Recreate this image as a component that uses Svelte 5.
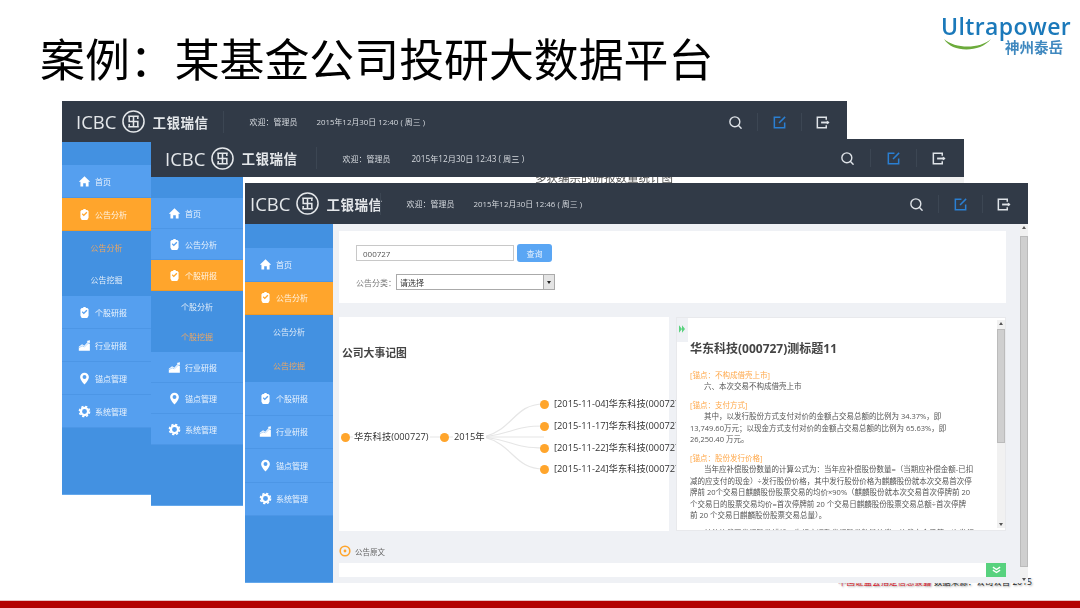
<script>
  // three screenshots of the same app, stacked on the slide
  const windows = [
    {
      id: 'a', left: 62, top: 0, width: 785, height: 394, head: 41, side: 89, strip: 23, row: 33, sub: 32.5, pad: 16, tool: 42.5, barPad: 14,
      time: '12:40', active: '公告分析', subs: ['公告分析', '公告挖掘'], activeSub: 0, gapBrand: 15, gapDate: 19, nameW: 48, dateSize: 7.9,
    },
    {
      id: 'b', left: 151, top: 38, width: 813, height: 367, head: 38, side: 92, strip: 21, row: 31, sub: 30.5, pad: 17, tool: 44.5, barPad: 14,
      time: '12:43', active: '个股研报', subs: ['个股分析', '个股挖掘'], activeSub: 1, gapBrand: 19, gapDate: 20, nameW: 49, dateSize: 8.2,
    },
    {
      id: 'c', left: 245, top: 82, width: 783, height: 400, head: 41, side: 88, strip: 24, row: 33.5, sub: 33.5, pad: 14, tool: 42.5, barPad: 5,
      time: '12:46', active: '公告分析', subs: ['公告分析', '公告挖掘'], activeSub: 1, gapBrand: -2, gapDate: 20, nameW: 47, dateSize: 7.9,
    },
  ]

  const nav = [
    { label: '首页', icon: 'home' },
    { label: '公告分析', icon: 'badge' },
    { label: '个股研报', icon: 'badge' },
    { label: '行业研报', icon: 'chart' },
    { label: '锚点管理', icon: 'pin' },
    { label: '系统管理', icon: 'gear' },
  ]

  const events = [
    { y: 87, text: '[2015-11-04]华东科技(000727)' },
    { y: 109, text: '[2015-11-17]华东科技(000727)' },
    { y: 131, text: '[2015-11-22]华东科技(000727)' },
    { y: 152, text: '[2015-11-24]华东科技(000727)' },
  ]

  const sections = [
    {
      tag: '[锚点：不构成借壳上市]',
      lines: ['六、本次交易不构成借壳上市'],
    },
    {
      tag: '[锚点：支付方式]',
      lines: [
        '其中，以发行股份方式支付对价的金额占交易总额的比例为 34.37%，即',
        '13,749.60万元；以现金方式支付对价的金额占交易总额的比例为 65.63%，即',
        '26,250.40 万元。',
      ],
    },
    {
      tag: '[锚点：股份发行价格]',
      lines: [
        '当年应补偿股份数量的计算公式为：当年应补偿股份数量=（当期应补偿金额-已扣',
        '减的应支付的现金）÷发行股份价格，其中发行股份价格为麒麟股份就本次交易首次停',
        '牌前 20个交易日麒麟股份股票交易的均价×90%（麒麟股份就本次交易首次停牌前 20',
        '个交易日的股票交易均价=首次停牌前 20 个交易日麒麟股份股票交易总额÷首次停牌',
        '前 20 个交易日麒麟股份股票交易总量）。',
      ],
    },
  ]
</script>

{#snippet navIcon(name)}
  <svg class="nav-icon" viewBox="0 0 16 16" fill="currentColor">
    {#if name === 'home'}
      <path d="M8 1.5 15 8.3h-2V14H9.6v-4H6.4v4H3V8.3H1z" />
    {:else if name === 'badge'}
      <path fill-rule="evenodd" d="M4.5 2.5h2V1.2h3v1.3h2L13 4v8l-1.6 2.8H4.6L3 12V4zM4.7 7.6l2.4 2.7 4.4-4.5-1.2-1.1-3.2 3.2-1.3-1.4z" />
    {:else if name === 'chart'}
      <path d="M1 14.5v-3.2l4-2.8 2.8 1.8 5-5.2 1.8 1v8.4z" />
      <path d="M1 9.4 5 6.4l2.7 1.8L12 3.6l-1.3-1 4-1-.3 4-1.2-1.2-5.3 5.3L5 8 1 11z" />
    {:else if name === 'pin'}
      <path fill-rule="evenodd" d="M8 .8a5.4 5.4 0 0 1 5.4 5.4C13.4 9.8 8 15.5 8 15.5S2.6 9.8 2.6 6.2A5.4 5.4 0 0 1 8 .8zM8 3.8a2.4 2.4 0 1 0 0 4.8 2.4 2.4 0 0 0 0-4.8z" />
    {:else}
      <circle cx="8" cy="8" r="4.4" fill="none" stroke="currentColor" stroke-width="2.8" />
      <circle cx="8" cy="8" r="6.3" fill="none" stroke="currentColor" stroke-width="1.8" stroke-dasharray="2.8 2.15" />
    {/if}
  </svg>
{/snippet}

{#snippet topIcons()}
  <div class="tools">
    <div class="tool">
      <svg viewBox="0 0 16 16" fill="none" stroke="#dfe3e8" stroke-width="1.5" stroke-linecap="round">
        <circle cx="7.3" cy="7.3" r="5.3" />
        <path d="m11.2 11.2 2.8 3" />
      </svg>
    </div>
    <div class="tool">
      <svg viewBox="0 0 16 16" fill="none" stroke="#2a7fd2" stroke-width="1.6">
        <path d="M13.5 8v5.5h-11v-11H9" />
        <path d="M14 2 7.5 8.5" />
      </svg>
    </div>
    <div class="tool">
      <svg viewBox="0 0 16 16" fill="none" stroke="#dfe3e8" stroke-width="1.6">
        <path d="M12 5V2.5H2.5v11H12V11" />
        <path d="M6.5 8h8" stroke-width="2" />
        <path d="m12.5 5.8 3 2.2-3 2.2z" fill="#dfe3e8" stroke="none" />
      </svg>
    </div>
  </div>
{/snippet}

<div class="slide">
  <header class="top">
    <h1>案例：某基金公司投研大数据平台</h1>
    <div class="ultra">
      <span class="ultra-name">Ultrapower</span>
      <span class="ultra-cn">神州泰岳</span>
      <svg class="ultra-arc" viewBox="0 0 50 14" fill="none">
        <path d="M1 1c8 14 36 14 47 0-11 10-36 10-47 0z" fill="#6cab3c" />
      </svg>
    </div>
  </header>

  <div class="canvas">
    <div class="stray"><span class="stray-red">中国证监会指定信息披露</span> 数据来源：公司公告 2015</div>

    {#each windows as w}
      <section
        class="win win-{w.id}"
        style="left:{w.left}px;top:{w.top}px;width:{w.width}px;height:{w.height}px;--head:{w.head}px;--side:{w.side}px;--strip:{w.strip}px;--row:{w.row}px;--sub:{w.sub}px;--pad:{w.pad}px;--tool:{w.tool}px;--bar-pad:{w.barPad}px"
      >
        <div class="bar">
          <div class="brand">
            <span class="icbc">ICBC</span>
            <svg class="coin" viewBox="0 0 24 24" fill="none" stroke="#e4e7ea" stroke-width="1.6">
              <circle cx="12" cy="12" r="11" />
              <path d="M6.5 6.5h11M6.5 17.5h11M7.5 6.5v5.5h9v5.5M16.5 6.5v3M7.5 17.5v-3M12 6.5v11" />
            </svg>
            <span class="brand-cn">工银瑞信</span>
          </div>
          <span class="divider" style="margin-left:{w.gapBrand}px"></span>
          <span class="hello" style="width:{w.nameW}px">欢迎：管理员</span>
          <span class="date" style="margin-left:{w.gapDate}px;font-size:{w.dateSize}px">2015年12月30日 {w.time} ( 周三 )</span>
          {@render topIcons()}
        </div>

        <div class="body">
          <nav class="side">
            <div class="strip"></div>
            {#each nav as item}
              <div class="item" class:on={item.label === w.active}>
                {@render navIcon(item.icon)}
                <span>{item.label}</span>
              </div>
              {#if item.label === w.active}
                <div class="subs">
                  {#each w.subs as s, i}
                    <div class="sub" class:picked={i === w.activeSub}>{s}</div>
                  {/each}
                </div>
              {/if}
            {/each}
          </nav>

          {#if w.id === 'b'}
            <div class="main-b">
              <p class="peek">多获编宗的研报数量统计图</p>
              <div class="peek-scroll"></div>
            </div>
          {/if}

          {#if w.id === 'c'}
            <div class="main">
              <div class="content">
                <div class="search">
                  <div class="search-row">
                    <input class="code" value="000727" readonly />
                    <button class="go">查询</button>
                  </div>
                  <div class="kind">
                    <span class="kind-label">公告分类：</span>
                    <div class="select">
                      <span>请选择</span>
                      <i class="caret"></i>
                    </div>
                  </div>
                </div>

                <div class="panels">
                  <div class="chart">
                    <h3>公司大事记图</h3>
                    <svg class="links" viewBox="0 0 340 214" fill="none" stroke="#e6e6e6" stroke-width="1.2">
                      <path d="M6 120H205" />
                      <path d="M145 120C175 112 175 87 205 87" />
                      <path d="M145 120C175 116 175 109 205 109" />
                      <path d="M145 120C175 124 175 131 205 131" />
                      <path d="M145 120C175 128 175 152 205 152" />
                    </svg>
                    <span class="dot" style="left:6px;top:120px"></span>
                    <span class="node" style="left:14px;top:120px">华东科技(000727)</span>
                    <span class="dot" style="left:105px;top:120px"></span>
                    <span class="node" style="left:114px;top:120px">2015年</span>
                    {#each events as e}
                      <span class="dot" style="left:205px;top:{e.y}px"></span>
                      <span class="node leaf" style="left:214px;top:{e.y}px">{e.text}</span>
                    {/each}
                  </div>

                  <div class="detail">
                    <div class="flap">
                      <svg viewBox="0 0 8 10" fill="#5ad27e">
                        <path d="M0 0 4 5 0 10zM4 0 8 5 4 10z" />
                      </svg>
                    </div>
                    <div class="doc">
                      <h2>华东科技(000727)测标题11</h2>
                      {#each sections as s}
                        <div class="sec">
                          <div class="tag">{s.tag}</div>
                          {#each s.lines as line, i}
                            <div class="line" class:first={i === 0}>{line}</div>
                          {/each}
                        </div>
                      {/each}
                      <div class="line first">其他补偿至发行股份麒麟公告相应调整发行股份数量补偿，补偿完全后第一次发行</div>
                    </div>
                    <div class="scroll small"><b class="thumb"></b></div>
                  </div>
                </div>

                <div class="source">
                  <svg viewBox="0 0 12 12" fill="none">
                    <circle cx="6" cy="6" r="4.8" stroke="#ffa52c" stroke-width="1.6" />
                    <circle cx="6" cy="6" r="1.4" fill="#ffa52c" />
                  </svg>
                  <span>公告原文</span>
                </div>
                <div class="source-bar">
                  <div class="expand">
                    <svg viewBox="0 0 10 8" fill="none" stroke="#fff" stroke-width="1.5">
                      <path d="m1 .8 4 2.6L9 .8M1 4.2l4 2.6 4-2.6" />
                    </svg>
                  </div>
                </div>
              </div>
              <div class="scroll"><b class="thumb"></b></div>
            </div>
          {/if}
        </div>
      </section>
    {/each}
  </div>

  <div class="rule"></div>
</div>

<style>
  :global(body) {
    margin: 0;
    background: #fff;
  }

  .slide {
    width: 1080px;
    height: 608px;
    display: flex;
    flex-direction: column;
    overflow: hidden;
    background: #fff;
    font-family: "Open Sans", "Noto Sans CJK SC", sans-serif;
  }

  .top {
    height: 101px;
    flex: none;
    display: flex;
    justify-content: space-between;
    align-items: flex-start;
  }

  h1 {
    margin: 33px 0 0 40px;
    font-family: "Noto Sans CJK SC", sans-serif;
    font-size: 44.9px;
    line-height: 50px;
    font-weight: 400;
    color: #000;
    filter: blur(0.3px);
  }

  .ultra {
    position: relative;
    width: 130px;
    margin: 14px 9px 0 0;
    display: flex;
    flex-direction: column;
    align-items: flex-end;
    filter: blur(0.4px);
  }

  .ultra-name {
    align-self: flex-start;
    font-family: "Open Sans", sans-serif;
    font-size: 23px;
    font-weight: 600;
    line-height: 24px;
    letter-spacing: 0.4px;
    color: #1b79ba;
    white-space: nowrap;
  }

  .ultra-cn {
    margin: 0 8px 0 0;
    font-family: "Noto Sans CJK SC", sans-serif;
    font-weight: 700;
    font-size: 14.5px;
    line-height: 17px;
    color: #3f88bf;
  }

  .ultra-arc {
    position: absolute;
    left: 2px;
    top: 24px;
    width: 50px;
    height: 14px;
  }

  .canvas {
    position: relative;
    flex: 1;
  }

  .stray {
    position: absolute;
    left: 838px;
    top: 474px;
    font-size: 8.5px;
    line-height: 14px;
    white-space: nowrap;
    color: #222;
    text-shadow: 1px 1px 2px #999;
  }

  .stray-red {
    color: #d3162a;
  }

  .rule {
    height: 7px;
    flex: none;
    background: #b30000;
    border-top: 1px solid #e5c3c3;
    box-sizing: content-box;
  }

  .win {
    position: absolute;
    display: flex;
    flex-direction: column;
    filter: blur(0.6px);
  }

  .bar {
    height: var(--head);
    flex: none;
    display: flex;
    align-items: center;
    padding-left: var(--bar-pad);
    background: #313a47;
    color: #d5d9de;
  }

  .brand {
    display: flex;
    align-items: center;
    color: #e4e7ea;
    white-space: nowrap;
  }

  .icbc {
    font-family: "Open Sans", sans-serif;
    font-size: 18.5px;
    font-weight: 500;
  }

  .coin {
    width: 23px;
    height: 23px;
    margin-left: 6px;
  }

  .brand-cn {
    margin-left: 7px;
    font-family: "Noto Sans CJK SC", sans-serif;
    font-weight: 700;
    font-size: 13.5px;
    letter-spacing: 0.5px;
  }

  .divider {
    width: 1px;
    height: 22px;
    margin-right: 25px;
    background: #3c4653;
  }

  .hello,
  .date {
    font-size: 8px;
    white-space: nowrap;
  }

  .tools {
    margin-left: auto;
    margin-right: 3px;
    display: flex;
  }

  .tool {
    width: var(--tool);
    height: 18px;
    display: flex;
    justify-content: center;
    border-left: 1px solid #3c4653;
  }

  .tool:first-child {
    border-left: 0;
  }

  .tool svg {
    width: 15px;
    height: 15px;
    margin-top: 2px;
  }

  .body {
    flex: 1;
    min-height: 0;
    display: flex;
  }

  .side {
    width: var(--side);
    flex: none;
    background: #4391e1;
    box-shadow: inset 0 -1px #64a8ec;
  }

  .strip {
    height: var(--strip);
  }

  .item {
    height: var(--row);
    box-sizing: border-box;
    display: flex;
    align-items: center;
    padding-left: var(--pad);
    background: #559fef;
    border-bottom: 1px solid #4c96e6;
    color: #fff;
    font-size: 8px;
    white-space: nowrap;
  }

  .item span {
    margin-left: 4px;
    opacity: 0.88;
  }

  .item.on {
    background: #ffa52c;
    border-bottom-color: #f09a26;
  }

  .nav-icon {
    width: 13px;
    height: 13px;
    flex: none;
  }

  .subs {
    background: #4391e1;
  }

  .sub {
    height: var(--sub);
    display: flex;
    align-items: center;
    justify-content: center;
    color: #e2edf9;
    font-size: 8px;
  }

  .sub.picked {
    color: #eda762;
  }

  .main-b {
    flex: 1;
    display: flex;
    overflow: hidden;
    background: #fff;
  }

  .peek {
    flex: 1;
    margin: -6px 0 0;
    padding-left: 292px;
    font-size: 11.5px;
    line-height: 14px;
    color: #555;
  }

  .peek-scroll {
    width: 24px;
    background: #f0f0f0;
  }

  .main {
    flex: 1;
    min-width: 0;
    display: flex;
    background: #eff1f5;
  }

  .content {
    flex: 1;
    min-width: 0;
    padding: 7px 14px 0 6px;
  }

  .search {
    height: 72px;
    box-sizing: border-box;
    padding: 13px 0 0 17px;
    background: #fff;
  }

  .search-row {
    display: flex;
    align-items: center;
  }

  .code {
    width: 158px;
    height: 16px;
    box-sizing: border-box;
    padding: 0 6px;
    border: 1.5px solid #c8c8c8;
    outline: none;
    font-family: "Open Sans", sans-serif;
    font-size: 8px;
    color: #555;
  }

  .go {
    width: 35px;
    height: 18px;
    margin-left: 3px;
    padding: 0;
    border: 0;
    border-radius: 3px;
    background: #5aa6f4;
    color: #e8f2fd;
    font-family: "Noto Sans CJK SC", sans-serif;
    font-size: 8px;
  }

  .kind {
    margin-top: 12px;
    display: flex;
    align-items: center;
  }

  .kind-label {
    width: 40px;
    font-size: 8px;
    color: #777;
    white-space: nowrap;
  }

  .select {
    width: 159px;
    height: 16px;
    box-sizing: border-box;
    padding-left: 3px;
    display: flex;
    align-items: center;
    justify-content: space-between;
    border: 1.5px solid #aaa;
    font-size: 8px;
    color: #333;
  }

  .caret {
    width: 10px;
    height: 100%;
    background: #e4e4e4;
    border-left: 1px solid #aaa;
    position: relative;
  }

  .caret::after {
    content: "";
    position: absolute;
    left: 3px;
    top: 6px;
    border: 2px solid transparent;
    border-top: 3px solid #222;
  }

  .panels {
    height: 214px;
    margin-top: 14px;
    display: flex;
    gap: 7px;
  }

  .chart {
    position: relative;
    width: 330px;
    flex: none;
    background: #fff;
  }

  .chart h3 {
    margin: 0;
    padding: 28px 0 0 3px;
    font-family: "Noto Sans CJK SC", sans-serif;
    font-size: 10.8px;
    line-height: 14px;
    font-weight: 700;
    color: #444;
  }

  .links {
    position: absolute;
    left: 0;
    top: 0;
    width: 340px;
    height: 214px;
  }

  .dot {
    position: absolute;
    width: 9px;
    height: 9px;
    margin: -4.5px 0 0 -4.5px;
    border-radius: 50%;
    background: #ffa52c;
  }

  .node {
    position: absolute;
    transform: translateY(-50%);
    padding: 0 1px;
    background: #fff;
    font-size: 9.3px;
    line-height: 12px;
    white-space: nowrap;
    color: #333;
  }

  .leaf {
    background: none;
  }

  .detail {
    position: relative;
    flex: 1;
    min-width: 0;
    display: flex;
    border: 1px solid #e8e9ec;
    background: #fff;
    overflow: hidden;
  }

  .flap {
    position: absolute;
    left: 0;
    top: 0;
    width: 11px;
    height: 24px;
    background: #eff1f5;
  }

  .flap svg {
    display: block;
    width: 6px;
    height: 8px;
    margin: 7px 0 0 2px;
  }

  .doc {
    flex: 1;
    min-width: 0;
    padding: 22px 0 0 13px;
    overflow: hidden;
    font-size: 7.5px;
    line-height: 11.45px;
    color: #555;
    white-space: nowrap;
  }

  .doc h2 {
    margin: 0 0 12px;
    font-size: 12px;
    line-height: 18px;
    font-weight: 700;
    color: #444;
  }

  .sec {
    margin-bottom: 7px;
  }

  .tag {
    color: #ffa84a;
  }

  .line.first {
    text-indent: 14px;
  }

  .scroll {
    position: relative;
    width: 8px;
    flex: none;
    background: #f1f1f1;
  }

  /* the little arrows at both ends of the scrollbars */
  .scroll::before,
  .scroll::after {
    content: "";
    position: absolute;
    left: 2px;
    border: 2px solid transparent;
  }

  .scroll::before {
    top: 2px;
    border-top: 0;
    border-bottom: 3px solid #555;
  }

  .scroll::after {
    bottom: 2px;
    border-bottom: 0;
    border-top: 3px solid #555;
  }

  .thumb {
    position: absolute;
    left: 0;
    right: 0;
    top: 12px;
    bottom: 16px;
    background: #cfcfcf;
    border: 1px solid #bbb;
    box-sizing: border-box;
  }

  .scroll.small {
    margin: 2px 0;
  }

  .scroll.small .thumb {
    top: 9px;
    bottom: 85px;
  }

  .source {
    height: 32px;
    box-sizing: border-box;
    padding-top: 8px;
    display: flex;
    align-items: center;
    font-size: 7.5px;
    color: #666;
  }

  .source svg {
    width: 12px;
    height: 12px;
    margin-right: 4px;
  }

  .source-bar {
    height: 14px;
    display: flex;
    justify-content: flex-end;
    background: #fff;
  }

  .expand {
    width: 20px;
    background: #58d27e;
    display: flex;
    align-items: center;
    justify-content: center;
  }

  .expand svg {
    width: 9px;
    height: 8px;
  }
</style>
